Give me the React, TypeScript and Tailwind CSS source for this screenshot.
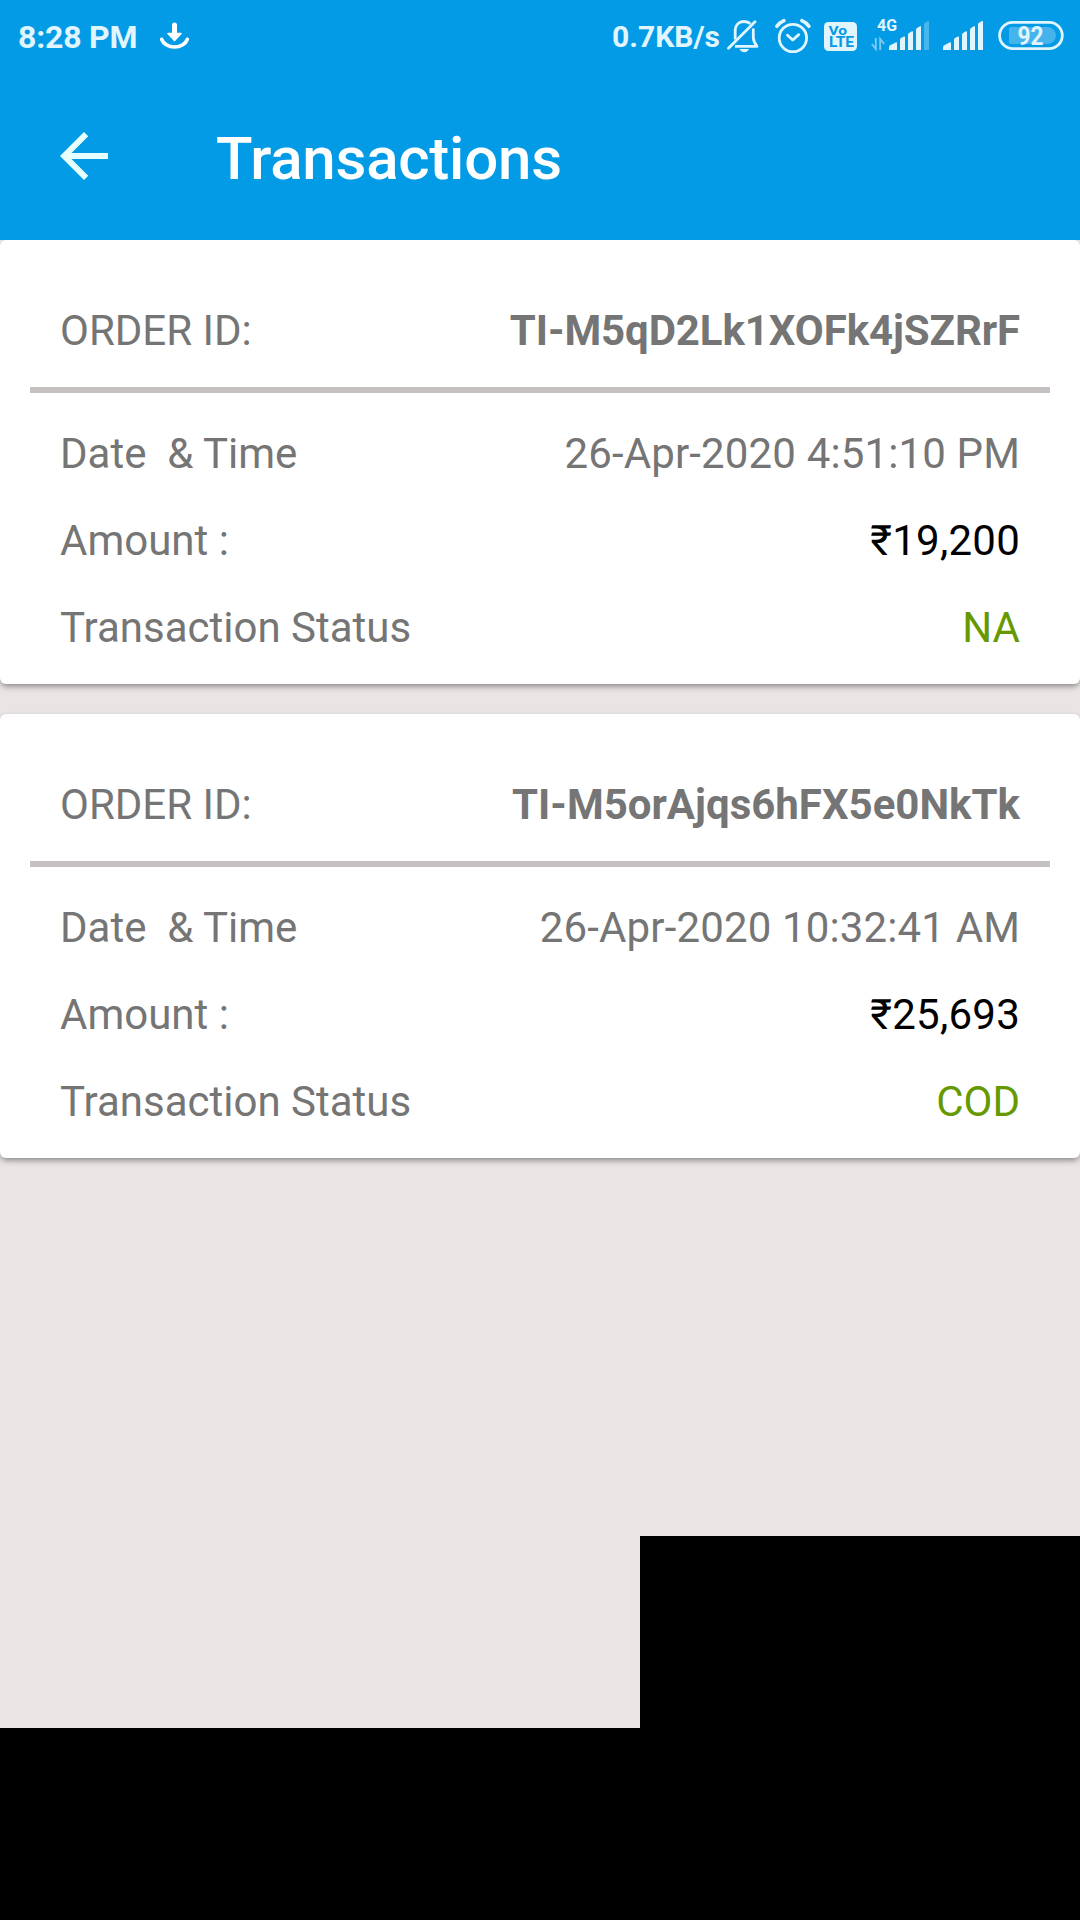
import React from "react";

type Transaction = { id: string; idClass: string; date: string; amount: string; status: string };

const transactions: Transaction[] = [
  {
    id: "TI-M5qD2Lk1XOFk4jSZRrF",
    idClass: "font-bold tracking-[-0.1px] text-[#757575]",
    date: "26-Apr-2020 4:51:10 PM",
    amount: "₹19,200",
    status: "NA",
  },
  {
    id: "TI-M5orAjqs6hFX5e0NkTk",
    idClass: "font-bold text-[#757575]",
    date: "26-Apr-2020 10:32:41 AM",
    amount: "₹25,693",
    status: "COD",
  },
];

const DownloadIcon = () => (
  <svg className="ml-[22px] h-[72px] w-[32px]" viewBox="159 0 32 72" fill="none">
    <path d="M174.5 25v9" stroke="#fff" strokeWidth="5" strokeLinecap="round" />
    <path d="M168 33.500h13l-6.500 7z" fill="#fff" stroke="#fff" strokeWidth="1.600" strokeLinejoin="round" />
    <path d="M161.700 39.300c1.500 4.200 6.500 7.700 12.800 7.700s11.300-3.500 12.800-7.700" stroke="#fff" strokeWidth="3.700" strokeLinecap="round" />
  </svg>
);

const BellOffIcon = () => (
  <svg className="h-[72px] w-[34px]" viewBox="727 0 34 72" fill="none" stroke="#e1f5fe" strokeWidth="2.800">
    <path d="M735.200 39.500v-8.500c0-6 3.800-9.500 8.900-9.500 2.600 0 4.700.8 6.300 2.300" />
    <path d="M753.300 28.500v9c0 3 1.300 5.800 3.700 8.800h-22" strokeLinejoin="round" />
    <path d="M728.500 48.300l26.500-26.500" strokeLinecap="round" />
    <path d="M739.500 49h9.500c-.8 2-2.500 3.200-4.700 3.200s-4-1.200-4.800-3.200z" fill="#e1f5fe" stroke="none" />
  </svg>
);

const AlarmIcon = () => (
  <svg className="ml-[13px] h-[72px] w-[38px]" viewBox="774 0 38 72" fill="none" stroke="#e1f5fe">
    <circle cx="792.900" cy="38" r="13.700" strokeWidth="2.800" />
    <path d="M787.500 35.200l5.300 4.800 5.900-5.300" strokeWidth="2.900" strokeLinecap="round" strokeLinejoin="round" />
    <path d="M776.900 26.300c1.800-2.500 4.100-4.400 7-5.600M801.900 20.700c2.900 1.200 5.200 3.100 7 5.600" strokeWidth="3.600" strokeLinecap="round" />
  </svg>
);

const VolteIcon = () => (
  <svg className="ml-[11px] h-[72px] w-[35px]" viewBox="823 0 35 72" fontFamily="Roboto, sans-serif">
    <rect x="824" y="22" width="33" height="29" rx="4.500" fill="#e1f5fe" />
    <g fill="#039be5" fontWeight="700">
      <text x="828.500" y="34.700" fontSize="13.500" textLength="18.500" lengthAdjust="spacingAndGlyphs">Vo</text>
      <text x="829" y="47.300" fontSize="14" textLength="25" lengthAdjust="spacingAndGlyphs">LTE</text>
    </g>
  </svg>
);

const DataSignalIcon = () => (
  <svg className="ml-[12px] h-[72px] w-[60px]" viewBox="870 0 60 72" fill="#e1f5fe">
    <text x="877" y="31.300" fontFamily="Roboto, sans-serif" fontSize="16.500" fontWeight="700" textLength="20" lengthAdjust="spacingAndGlyphs">4G</text>
    <path d="M875.800 38v11l-4-5M880.200 50v-11l4 5" fill="none" stroke="#7bcaf2" strokeWidth="1.900" />
    <path d="M889 50v-2.500q0-1.500 1.300-2.200l5.700-3q1-.5 1 1v6.700z" />
    <path d="M900 50v-10.500q0-1 1-1.600l3-1.400q1-.4 1 .8v12.700z" />
    <path d="M908 50v-15.500q0-1 1-1.600l3-1.600q1-.4 1 .8v17.900z" />
    <path d="M916 50v-20.500q0-1 1-1.600l3-1.700q1-.4 1 .8v23z" />
    <path d="M924 50v-25.500q0-1 1-1.700l3-1.700q1-.4 1 .8v28.100z" opacity=".3" />
  </svg>
);

const SignalIcon = () => (
  <svg className="ml-[12px] h-[72px] w-[42px]" viewBox="942 0 42 72" fill="#e1f5fe">
    <path d="M943 50v-2.500q0-1.500 1.300-2.200l5.700-3q1-.5 1 1v6.700z" />
    <path d="M954 50v-10.500q0-1 1-1.600l3-1.400q1-.4 1 .8v12.700z" />
    <path d="M962 50v-15.500q0-1 1-1.600l3-1.600q1-.4 1 .8v17.900z" />
    <path d="M970 50v-20.500q0-1 1-1.600l3-1.700q1-.4 1 .8v23z" />
    <path d="M978 50v-25.500q0-1 1-1.700l3-1.700q1-.4 1 .8v28.100z" />
  </svg>
);

const BatteryIcon = () => (
  <svg className="ml-[13px] h-[72px] w-[68px]" viewBox="997 0 68 72">
    <rect x="999.600" y="22.300" width="62.700" height="26.400" rx="13.200" fill="none" stroke="#e1f5fe" strokeWidth="2.800" />
    <path d="M1011 27h36.500a8.500 8.500 0 0 1 0 17h-36.500q-2 0-2-2v-13q0-2 2-2z" fill="#45b4ec" />
    <text x="1017.500" y="45" fill="#e1f5fe" fontFamily="Roboto, sans-serif" fontSize="25.500" fontWeight="700" textLength="26" lengthAdjust="spacingAndGlyphs">92</text>
  </svg>
);

const StatusBar = () => (
  <div className="flex h-[72px] items-center text-[#e1f5fe]">
    <span className="ml-[18px] w-[119px] pt-[2px] text-[32px] leading-[72px] font-bold tracking-[-0.2px] whitespace-nowrap">8:28 PM</span>
    <DownloadIcon />
    <span className="ml-auto pt-[2px] text-[30px] leading-[70px] font-bold whitespace-nowrap">0.7KB/s</span>
    <div className="mr-[15px] ml-[7px] flex">
      <BellOffIcon />
      <AlarmIcon />
      <VolteIcon />
      <DataSignalIcon />
      <SignalIcon />
      <BatteryIcon />
    </div>
  </div>
);

const Row = ({ label, value, valueClass }: { label: string; value: string; valueClass: string }) => (
  <div className="flex justify-between px-[60px] whitespace-pre">
    <span className="text-[#757575]">{label}</span>
    <span className={valueClass}>{value}</span>
  </div>
);

const Card = ({ t }: { t: Transaction }) => (
  <section className="h-[444px] rounded-[6px] bg-white pt-[62px] text-[42px] leading-[57px] shadow-[0_3px_6px_-1px_rgba(0,0,0,0.45)]">
    <Row label="ORDER ID:" value={t.id} valueClass={t.idClass} />
    <div className="mx-[30px] mt-[28px] mb-[32px] h-[6px] bg-[#c4c1c0]" />
    <div className="flex flex-col gap-[30px]">
      <Row label="Date  & Time" value={t.date} valueClass="tracking-[0.14px] text-[#757575]" />
      <Row label="Amount :" value={t.amount} valueClass="tracking-[0.25px] text-black" />
      <Row label="Transaction Status" value={t.status} valueClass="text-[#669900]" />
    </div>
  </section>
);

export default function App() {
  return (
    <div className="flex h-[1920px] w-[1080px] flex-col overflow-hidden bg-[#e9e5e4] font-[Roboto,sans-serif]">
      <header className="z-10 h-[240px] shrink-0 bg-[#039be5]">
        <StatusBar />
        <div className="flex h-[168px] items-center">
          <svg className="ml-[48px] h-[72px] w-[72px]" viewBox="0 0 24 24" fill="#e6ffff">
            <path d="M20 11H7.830l5.590-5.590L12 4l-8 8 8 8 1.410-1.410L7.830 13H20v-2z" />
          </svg>
          <h1 className="ml-[96px] pt-[5px] text-[60px] leading-[71px] font-medium tracking-[-0.22px] text-white">Transactions</h1>
        </div>
      </header>
      <main className="flex flex-1 flex-col gap-[30px]">
        {transactions.map((t) => (
          <Card key={t.id} t={t} />
        ))}
      </main>
      <div className="ml-[640px] h-[192px] shrink-0 bg-black" />
      <div className="h-[192px] shrink-0 bg-black" />
    </div>
  );
}
